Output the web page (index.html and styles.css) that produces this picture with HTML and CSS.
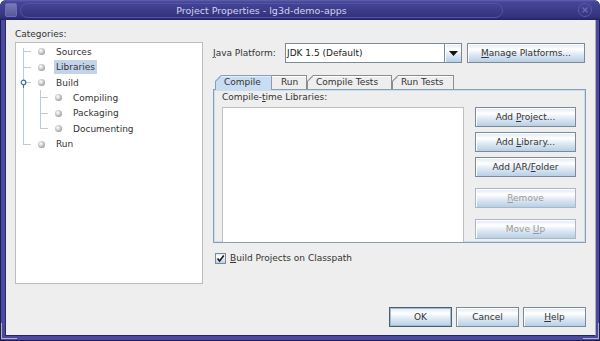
FILE: index.html
```html
<!DOCTYPE html>
<html>
<head>
<meta charset="utf-8">
<link rel="stylesheet" href="styles.css">
</head>
<body>
<div class="window">
  <div class="titlebar">
    <span class="win-icon"></span>
    <div class="title-pill"><span class="title">Project Properties - lg3d-demo-apps</span></div>
    <span class="win-close"><svg width="14" height="14" viewBox="0 0 14 14"><path d="M4.5 4.5 L9.5 9.5 M9.5 4.5 L4.5 9.5" stroke="#6a6ab4" stroke-width="1.3" fill="none"/></svg></span>
  </div>
  <div class="client">
    <div class="main">
      <div class="left">
        <div class="cat-label">Categories:</div>
        <div class="tree">
          <div class="row l1 first"><span class="guide"></span><span class="ball"></span><span class="text">Sources</span></div>
          <div class="row l1"><span class="guide"></span><span class="ball"></span><span class="text sel">Libraries</span></div>
          <div class="row l1"><span class="guide"><svg class="handle" width="22" height="15" viewBox="0 0 22 15"><circle cx="7.5" cy="7.5" r="2.3" fill="#ffffff" stroke="#3d6ea8" stroke-width="1.2"/><path d="M7.5 9.8 V13" stroke="#3d6ea8" stroke-width="1"/></svg></span><span class="ball"></span><span class="text">Build</span></div>
          <div class="row l2"><span class="guide"></span><span class="ball"></span><span class="text">Compiling</span></div>
          <div class="row l2"><span class="guide"></span><span class="ball"></span><span class="text">Packaging</span></div>
          <div class="row l2 last2"><span class="guide"></span><span class="ball"></span><span class="text">Documenting</span></div>
          <div class="row l1 last"><span class="guide"></span><span class="ball"></span><span class="text">Run</span></div>
        </div>
      </div>
      <div class="right">
        <div class="platform-row">
          <span class="platform-label"><u>J</u>ava Platform:</span>
          <div class="combo">
            <span class="combo-field">JDK 1.5 (Default)</span>
            <span class="combo-arrow"><svg width="9" height="5" viewBox="0 0 9 5"><polygon points="0,0 9,0 4.5,5" fill="#111"/></svg></span>
          </div>
          <button class="btn manage"><u>M</u>anage Platforms...</button>
        </div>
        <div class="tabs">
          <div class="tab selected t-compile"><span class="tab-in">Compile</span></div>
          <div class="tab noslant t-run"><span class="tab-in">Run</span></div>
          <div class="tab t-ctests"><span class="tab-in">Compile Tests</span></div>
          <div class="tab t-rtests"><span class="tab-in">Run Tests</span></div>
        </div>
        <div class="panel">
          <div class="panel-label">Compile-<u>t</u>ime Libraries:</div>
          <div class="panel-body">
            <div class="list"></div>
            <div class="side-buttons">
              <button class="btn">Add <u>P</u>roject...</button>
              <button class="btn">Add <u>L</u>ibrary...</button>
              <button class="btn">Add JAR/<u>F</u>older</button>
              <button class="btn disabled spaced"><u>R</u>emove</button>
              <button class="btn disabled spaced">Move <u>U</u>p</button>
            </div>
          </div>
        </div>
        <div class="check-row">
          <span class="checkbox"><svg width="9" height="9" viewBox="0 0 9 9"><path d="M1.5 4.5 L3.6 7 L7.8 1.6" stroke="#1a1a1a" stroke-width="1.6" fill="none"/></svg></span>
          <span class="check-label"><u>B</u>uild Projects on Classpath</span>
        </div>
      </div>
    </div>
    <div class="footer">
      <button class="btn foot default">OK</button>
      <button class="btn foot">Cancel</button>
      <button class="btn foot"><u>H</u>elp</button>
    </div>
  </div>
</div>
</body>
</html>
```

FILE: styles.css
```css
html, body {
  margin: 0;
  padding: 0;
  background: #ffffff;
}

body {
  font-family: "DejaVu Sans", sans-serif;
  font-size: 9px;
  color: #333333;
}

.window {
  width: 600px;
  height: 341px;
  box-sizing: border-box;
  padding: 0 4px 5px 5px;
  display: flex;
  flex-direction: column;
  background-color: #4a4aa2;
  background-image:
    linear-gradient(#b4b4b4, #b4b4b4),
    linear-gradient(#b4b4b4, #b4b4b4),
    linear-gradient(#b4b4b4, #b4b4b4),
    linear-gradient(#b4b4b4, #b4b4b4);
  background-repeat: no-repeat;
  background-size: 1px 16px, 16px 1px, 1px 16px, 16px 1px;
  background-position: 1px 323px, 1px 338px, 598px 323px, 583px 338px;
  box-shadow: inset 0 0 0 1px #1e1e52;
  border-radius: 6px 6px 0 0;
  overflow: hidden;
}

/* ---------- title bar ---------- */
.titlebar {
  height: 20px;
  flex: none;
  margin: 0 -4px 0 -5px;
  padding: 0 8px 0 5px;
  display: flex;
  align-items: center;
  background: linear-gradient(#6262b0 0%, #46469a 10%, #3c3c8a 50%, #33337c 85%, #222260 100%);
  border-radius: 6px 6px 0 0;
}

.win-icon {
  width: 10px;
  height: 12px;
  border: 1px solid #6c6cb4;
  border-radius: 2px;
  background: linear-gradient(#7a7ab8, #56569c);
  flex: none;
}

.title-pill {
  flex: 1;
  height: 13px;
  margin: 0 75px 0 3px;
  border: 1px solid #5454a6;
  border-radius: 8px;
  display: flex;
  align-items: center;
  justify-content: center;
}

.title {
  font-size: 9.5px;
  color: #d2d2f0;
  line-height: 13px;
}

.win-close {
  width: 14px;
  height: 14px;
  box-sizing: border-box;
  border: 1px solid #5a5aaa;
  border-radius: 50%;
  display: flex;
  align-items: center;
  justify-content: center;
  flex: none;
}

.win-close svg {
  display: block;
  margin: -1px;
}

/* ---------- client ---------- */
.client {
  flex: 1;
  background: #eeeeee;
  border-left: 1px solid #2a2a62;
  border-right: 1px solid #b0b0b0;
  border-bottom: 1px solid #262660;
  padding: 8px 9px 8px 9px;
  display: flex;
  flex-direction: column;
}

.main {
  display: flex;
  gap: 10px;
}

.left {
  width: 188px;
  flex: none;
  display: flex;
  flex-direction: column;
}

.cat-label {
  height: 14px;
  line-height: 13px;
}

.tree {
  height: 242px;
  box-sizing: border-box;
  border: 1px solid #bcbcbc;
  background: #ffffff;
  padding-top: 1px;
}

.row {
  height: 15.42px;
  display: flex;
  align-items: center;
}

.guide {
  align-self: stretch;
  flex: none;
  background-repeat: no-repeat;
}

.handle {
  display: block;
  margin-top: 0.2px;
}

.l1 .guide {
  width: 22px;
  background-image:
    linear-gradient(#bccbdc, #bccbdc),
    linear-gradient(#bccbdc, #bccbdc);
  background-size: 1px 100%, 8px 1px;
  background-position: 7px 0, 7px 50%;
}

.l1.first .guide {
  background-size: 1px 12px, 8px 1px;
  background-position: 7px 4px, 7px 50%;
}

.l1.last .guide {
  background-size: 1px 50%, 8px 1px;
  background-position: 7px 0, 7px 50%;
}

.l2 .guide {
  width: 39px;
  background-image:
    linear-gradient(#bccbdc, #bccbdc),
    linear-gradient(#bccbdc, #bccbdc),
    linear-gradient(#bccbdc, #bccbdc);
  background-size: 1px 100%, 1px 100%, 8px 1px;
  background-position: 7px 0, 24px 0, 24px 50%;
}

.l2.last2 .guide {
  background-size: 1px 100%, 1px 50%, 8px 1px;
}

.ball {
  width: 7px;
  height: 7px;
  box-sizing: border-box;
  border-radius: 50%;
  flex: none;
  background: radial-gradient(circle at 40% 38%, #ffffff 0, #d4d4d4 35%, #9c9c9c 75%, #7c7c7c 100%);
  margin-right: 9px;
}

.text {
  padding: 0 1px 0 2px;
  line-height: 14px;
  height: 14px;
}

.text.sel {
  background: #c2d3ea;
  padding-right: 2px;
}

/* ---------- right column ---------- */
.right {
  flex: 1;
  display: flex;
  flex-direction: column;
  padding-top: 15px;
}

.platform-row {
  height: 20px;
  display: flex;
  align-items: center;
}

.platform-label {
  width: 72px;
  flex: none;
}

.combo {
  width: 177px;
  height: 20px;
  box-sizing: border-box;
  border: 1px solid #7a8a99;
  background: #ffffff;
  display: flex;
  flex: none;
}

.combo-field {
  flex: 1;
  padding-left: 1px;
  line-height: 18px;
  color: #222;
}

.combo-arrow {
  width: 16px;
  border-left: 1px solid #7a8a99;
  background: linear-gradient(#dde8f3 0%, #ffffff 30%, #dde8f3 60%, #b8cfe5 100%);
  box-shadow: inset 1px 1px 0 #ffffff;
  display: flex;
  align-items: center;
  justify-content: center;
}

.combo-arrow svg {
  display: block;
}

.btn {
  font-family: "DejaVu Sans", sans-serif;
  font-size: 9px;
  color: #333333;
  height: 20px;
  line-height: 18px;
  box-sizing: border-box;
  border: 1px solid #7a8a99;
  background: linear-gradient(#dde8f3 0%, #ffffff 30%, #dde8f3 60%, #b8cfe5 100%);
  box-shadow: inset 1px 1px 0 #ffffff;
  padding: 0;
  margin: 0;
  display: block;
  text-align: center;
  white-space: nowrap;
  flex: none;
}

.btn.manage {
  width: 118px;
  margin-left: 5px;
}

.btn.disabled {
  color: #9a9a9a;
  border-color: #a9b8c8;
}

/* ---------- tabs ---------- */
.tabs {
  margin-top: 12px;
  height: 14px;
  display: flex;
  padding-left: 2px;
}

.tab {
  height: 14px;
  box-sizing: border-box;
  padding: 1px 1px 0 1px;
  background: #8c8c8c;
  clip-path: polygon(0 100%, 0 6px, 6px 0, 100% 0, 100% 100%);
  flex: none;
}

.tab-in {
  display: block;
  height: 13px;
  line-height: 13px;
  padding-left: 8px;
  background: #eeeeee;
  box-shadow: inset 0 1px 0 #ffffff;
  clip-path: polygon(0 100%, 0 5.6px, 5.6px 0, 100% 0, 100% 100%);
}

.tab.noslant,
.tab.noslant .tab-in {
  clip-path: none;
}

.tab.noslant {
  padding-left: 0;
}

.tab.selected {
  background: #8a9db2;
  height: 15px;
  margin-bottom: -1px;
  position: relative;
  z-index: 1;
}

.tab.selected .tab-in {
  height: 14px;
  background: #c8ddf2;
  box-shadow: inset 0 1px 0 #e4eef9;
}

.t-compile { width: 57px; }
.t-run { width: 35px; }
.t-ctests { width: 85px; }
.t-rtests { width: 62px; }

.t-run .tab-in { padding-left: 9px; }

/* ---------- panel ---------- */
.panel {
  height: 154px;
  box-sizing: border-box;
  border: 1px solid #8a9db2;
  box-shadow: inset 0 1px 0 #c8ddf2, inset 1px 0 0 #c8ddf2, inset -1px 0 0 #c8ddf2, inset 0 -1px 0 #c8ddf2;
  padding: 0 9px 0 8px;
  display: flex;
  flex-direction: column;
}

.panel-label {
  height: 14px;
  line-height: 15px;
  flex: none;
}

.panel-body {
  margin-top: 3px;
  flex: 1;
  display: flex;
}

.list {
  width: 242px;
  box-sizing: border-box;
  border: 1px solid #c0c0c0;
  border-bottom: none;
  background: #ffffff;
  flex: none;
}

.side-buttons {
  margin-left: 11px;
  width: 101px;
  display: flex;
  flex-direction: column;
  gap: 5px;
}

.side-buttons .btn {
  width: 101px;
}

.side-buttons .btn.spaced {
  margin-top: 6px;
}

/* ---------- checkbox ---------- */
.check-row {
  margin-top: 9px;
  height: 12px;
  display: flex;
  align-items: center;
  padding-left: 2px;
}

.checkbox {
  width: 11px;
  height: 11px;
  box-sizing: border-box;
  border: 1px solid #7a8a99;
  background: linear-gradient(#dde8f3 0%, #ffffff 30%, #dde8f3 60%, #b8cfe5 100%);
  display: flex;
  align-items: center;
  justify-content: center;
  flex: none;
}

.checkbox svg {
  display: block;
}

.check-label {
  margin-left: 4px;
  line-height: 12px;
}

/* ---------- footer ---------- */
.footer {
  margin-top: auto;
  display: flex;
  justify-content: flex-end;
  gap: 4px;
}

.btn.foot {
  width: 63px;
}

.btn.default {
  border-color: #4d5e74;
  box-shadow: inset 0 0 0 1px #a6bad0;
}
```
